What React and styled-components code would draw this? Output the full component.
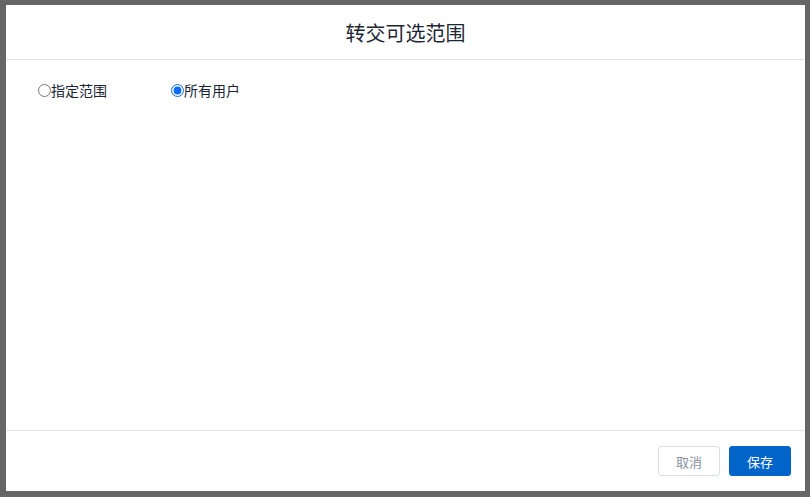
import React, { useState } from 'react'
import styled, { createGlobalStyle } from 'styled-components'

const GlobalStyle = createGlobalStyle`
  html, body {
    margin: 0;
    padding: 0;
    background: #666666;
    font-family: "Microsoft YaHei", "Noto Sans CJK SC", "Liberation Sans", sans-serif;
  }
`

const OPTIONS = [
  { value: 'range', name: '指定范围' },
  { value: 'all', name: '所有用户' }
]

const App = () => {
  const [scope, setScope] = useState('all')

  return (
    <>
      <GlobalStyle />
      <Page>
        <Dialog>
          <Header>
            <Title>转交可选范围</Title>
          </Header>
          <Body>
            {OPTIONS.map(option => (
              <RadioLabel key={option.value}>
                <Radio
                  type="radio"
                  name="scope"
                  value={option.value}
                  checked={scope === option.value}
                  onChange={() => setScope(option.value)}
                />
                {option.name}
              </RadioLabel>
            ))}
          </Body>
          <Footer>
            <Button>取消</Button>
            <Button primary>保存</Button>
          </Footer>
        </Dialog>
      </Page>
    </>
  )
}

export default App

const Page = styled.div`
  width: 810px;
  height: 497px;
  box-sizing: border-box;
  padding: 5px 5px 6px 6px;
  display: flex;
`
const Dialog = styled.div`
  flex: 1;
  background: #fff;
  display: flex;
  flex-direction: column;
`
const Header = styled.div`
  height: 54px;
  border-bottom: 1px solid #e4e4ea;
  display: flex;
  align-items: center;
  justify-content: center;
`
const Title = styled.h1`
  margin: 0;
  font-size: 20px;
  font-weight: normal;
  color: #1d2733;
`
const Body = styled.div`
  flex: 1;
  padding: 20px 32px;
  display: flex;
  align-items: flex-start;
`
const RadioLabel = styled.label`
  display: flex;
  align-items: center;
  width: 133px;
  font-size: 14px;
  line-height: 20px;
  color: #1a2333;
  cursor: pointer;
`
const Radio = styled.input`
  margin: 0;
  width: 13px;
  height: 13px;
  accent-color: #0a6cf5;
`
const Footer = styled.div`
  height: 61px;
  border-top: 1px solid #e4e4ea;
  display: flex;
  align-items: flex-start;
  justify-content: flex-end;
  gap: 9px;
  padding: 15px 14px 0 0;
  box-sizing: border-box;
`
const Button = styled.button`
  width: 62px;
  height: 30px;
  border-radius: 3px;
  font-size: 13px;
  font-family: inherit;
  cursor: pointer;
  border: 1px solid ${props => (props.primary ? '#0064c8' : '#dcdfe6')};
  background: ${props => (props.primary ? '#0064c8' : '#fff')};
  color: ${props => (props.primary ? '#fff' : '#8a93a3')};
`
